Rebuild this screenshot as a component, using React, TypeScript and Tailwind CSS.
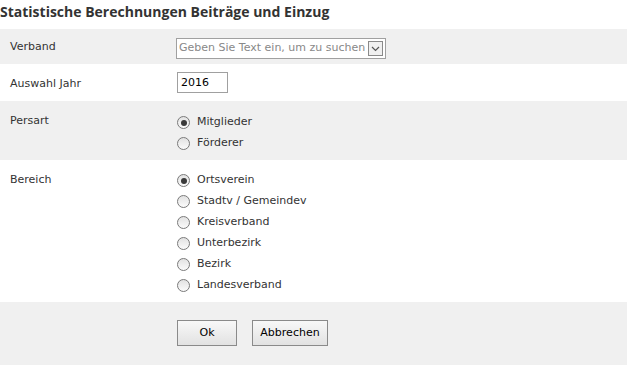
import React from 'react';

const label = 'text-[11px] text-[#333] font-["DejaVu_Sans",sans-serif]';

const Radio: React.FC<{ checked?: boolean; text: string }> = ({ checked, text }) => (
  <div className="flex items-center h-[21px]">
    <span className="w-[13px] h-[13px] rounded-full border border-[#7a7a7a] bg-gradient-to-b from-[#e2e2e2] to-[#fbfbfb] flex items-center justify-center">
      {checked && <span className="w-[6px] h-[6px] rounded-full bg-[#3a3a3a]" />}
    </span>
    <span className={`ml-[7px] ${label}`}>{text}</span>
  </div>
);

export default function App() {
  return (
    <div className="w-[627px] h-[365px] bg-white overflow-hidden">
      <h1 className='h-[29px] pt-[1px] text-[14px] font-bold text-[#333] font-["Open_Sans",sans-serif]'>
        Statistische Berechnungen Beiträge und Einzug
      </h1>
      <div className="flex h-[35px] bg-[#f0f0f0]">
        <div className={`w-[176px] pl-[10px] pt-[10px] ${label}`}>Verband</div>
        <div className="pt-[9px]">
          <div className="flex items-center w-[210px] h-[21px] border border-[#a0a0a0] bg-white pl-[2px]">
            <span className='flex-1 text-[11px] text-[#888] font-["DejaVu_Sans",sans-serif] whitespace-nowrap overflow-hidden'>
              Geben Sie Text ein, um zu suchen
            </span>
            <span className="w-[15px] h-[15px] mr-[2px] border border-[#8a8a8a] bg-[#f0f0f0] flex items-center justify-center">
              <svg width="9" height="6" viewBox="0 0 9 6">
                <path d="M1 1 L4.5 4.5 L8 1" fill="none" stroke="#555" strokeWidth="1.2" />
              </svg>
            </span>
          </div>
        </div>
      </div>
      <div className="flex h-[37px]">
        <div className={`w-[177px] pl-[10px] pt-[12px] ${label}`}>Auswahl Jahr</div>
        <div className="pt-[8px]">
          <div className='w-[51px] h-[21px] border border-[#a0a0a0] pl-[3px] text-[11px] text-black font-["DejaVu_Sans",sans-serif] leading-[19px]'>
            2016
          </div>
        </div>
      </div>
      <div className="flex h-[59px] bg-[#f0f0f0]">
        <div className={`w-[177px] pl-[10px] pt-[12px] ${label}`}>Persart</div>
        <div className="pt-[11px]">
          <Radio checked text="Mitglieder" />
          <Radio text="Förderer" />
        </div>
      </div>
      <div className="flex h-[142px]">
        <div className={`w-[177px] pl-[10px] pt-[12px] ${label}`}>Bereich</div>
        <div className="pt-[10px]">
          <Radio checked text="Ortsverein" />
          <Radio text="Stadtv / Gemeindev" />
          <Radio text="Kreisverband" />
          <Radio text="Unterbezirk" />
          <Radio text="Bezirk" />
          <Radio text="Landesverband" />
        </div>
      </div>
      <div className="flex h-[63px] bg-[#f0f0f0] pl-[177px] pt-[18px] gap-[15px]">
        <button className={`w-[60px] h-[26px] border border-[#8a8a8a] bg-gradient-to-b from-[#f8f8f8] to-[#e2e2e2] ${label} text-black`}>Ok</button>
        <button className={`w-[76px] h-[26px] border border-[#8a8a8a] bg-gradient-to-b from-[#f8f8f8] to-[#e2e2e2] ${label} text-black`}>Abbrechen</button>
      </div>
    </div>
  );
}
